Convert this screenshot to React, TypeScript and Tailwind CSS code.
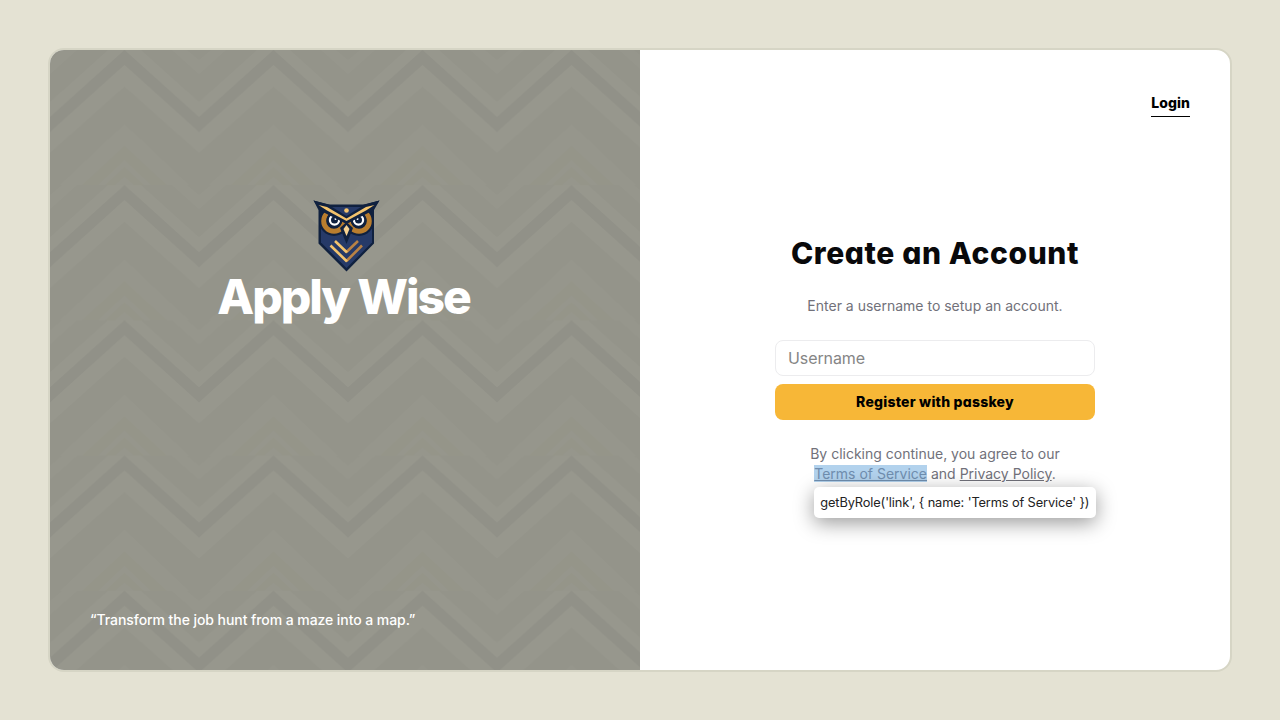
import React from "react";

function Backdrop() {
  return (
    <svg className="absolute inset-0 h-full w-full" aria-hidden="true">
      <defs>
        <pattern id="zigzag" width="149" height="135.2" patternUnits="userSpaceOnUse">
          <rect width="149" height="135.2" fill="#94948a" />
          <path d="M0 10 L12 0 H27 L0 24 Z M149 10 L137 0 H122 L149 24 Z" fill="#96968c" />
          <path d="M0 52 L58 0 H74.500 L0 67 Z M149 52 L91 0 H74.500 L149 67 Z" fill="#97978d" />
          <path d="M0 67 L74.500 0 L149 67 V82 L74.500 15 L0 82 Z" fill="#919188" />
          <path d="M0 82 L74.500 15 L149 82 V103 L74.500 36.500 L0 103 Z" fill="#97978d" />
          <path d="M10 135.200 L74.500 74 L139 135.200 Z" fill="#96968c" />
          <path d="M32 135.200 L74.500 96 L117 135.200 H101 L74.500 110 L48 135.200 Z" fill="#959589" />
          <path d="M55 135.200 L74.500 117 L94 135.200 H84 L74.500 127 L65 135.200 Z" fill="#959589" />
        </pattern>
      </defs>
      <rect width="100%" height="100%" fill="url(#zigzag)" />
    </svg>
  );
}

function Owl() {
  return (
    <svg viewBox="0 0 92 90" className="h-[90px] w-[92px]" aria-hidden="true">
      <path d="M13.500 10.500 L28 14.500 H65 L79.500 10.500 L74 20 V53.500 L46.500 81.500 L18.500 53.500 V20 Z" fill="#10213f" />
      <path d="M21 30 H72 V52.500 L46.500 78 L21 52.500 Z" fill="#263a68" />
      <circle cx="34" cy="31" r="15" fill="#10213f" />
      <circle cx="59" cy="31" r="15" fill="#10213f" />
      <circle cx="34" cy="31" r="10.300" fill="none" stroke="#b97d2e" strokeWidth="5" />
      <circle cx="59" cy="31" r="10.300" fill="none" stroke="#b97d2e" strokeWidth="5" />
      <circle cx="34.500" cy="30" r="8" fill="#10213f" />
      <circle cx="58.500" cy="30" r="8" fill="#10213f" />
      <circle cx="34.500" cy="30" r="4.600" fill="#10213f" stroke="#fff" strokeWidth="2.200" />
      <circle cx="58.500" cy="30" r="4.600" fill="#10213f" stroke="#fff" strokeWidth="2.200" />
      <circle cx="35.500" cy="29" r="1" fill="#fff" />
      <circle cx="57.500" cy="29" r="1" fill="#fff" />
      <path d="M13.500 10.500 L29 14.500 L46.500 24 L64 14.500 L79.500 10.500 L72 21 L46.500 34 L21 21 Z" fill="#10213f" />
      <path d="M32 17 H61 L46.500 26 Z" fill="#263a68" />
      <path d="M18.500 15 L27 17 L46.500 28.500 L66 17 L74.500 15 L66 20.500 L46.500 31 L27 20.500 Z" fill="#f3c36d" />
      <circle cx="46.500" cy="20.500" r="2.300" fill="#f3c36d" />
      <path d="M46.500 32 L53 38 L46.500 54 L40 38 Z" fill="#10213f" />
      <path d="M46.500 35 L49.500 39 L46.500 46 L43.500 39 Z" fill="#f7d291" />
      <path d="M46.500 62 L58 51 M46.500 71 L62 55.500" fill="none" stroke="#b98245" strokeWidth="2.600" />
      <path d="M35 51 L47 62.500 M30.500 55.500 L47 71.500" fill="none" stroke="#f3c36d" strokeWidth="2.600" />
    </svg>
  );
}

export default function App() {
  return (
    <main className="h-screen w-full bg-[#e4e2d3] p-12 font-['Inter',sans-serif] text-[#09090b]">
      <div className="grid h-full grid-cols-2 overflow-hidden rounded-2xl border-2 border-[#d6d5c5] bg-white">
        <section className="relative flex flex-col overflow-hidden p-10 text-white">
          <Backdrop />
          <div className="relative flex flex-1 flex-col items-center pt-[100px]">
            <div className="ml-px h-[90px]"><Owl /></div>
            <div className="-mt-[7px] mr-[3px] text-5xl leading-[48px] font-extrabold tracking-[-2.1px]">Apply Wise</div>
          </div>
          <p className="relative text-sm leading-5 font-medium tracking-[-0.07px]">“Transform the job hunt from a maze into a map.”</p>
        </section>
        <section className="relative flex flex-col items-center">
          <div className="flex w-full justify-end px-10 pt-10">
            <a href="#" className="border-b border-black pt-[3px] pb-[3px] text-sm leading-5 font-extrabold tracking-[0.08px] text-black [font-feature-settings:'cv11']">Login</a>
          </div>
          <div className="flex w-80 flex-col items-center pt-[118px] text-center">
            <h1 className="text-[30px] leading-9 font-extrabold tracking-[0.62px] whitespace-nowrap [font-feature-settings:'cv11']">Create an Account</h1>
            <p className="mt-[25px] text-sm leading-5 text-[#71717a]">Enter a username to setup an account.</p>
            <input placeholder="Username" className="mt-6 h-9 w-full rounded-lg border border-[#ececee] px-3 text-base tracking-[-0.1px] outline-none placeholder:text-[#858585]" />
            <button className="mt-2 h-9 w-full rounded-lg bg-[#f7b737] text-sm font-extrabold tracking-[0.22px] text-black [font-feature-settings:'cv11']">Register with passkey</button>
            <p className="mt-6 text-sm leading-5 text-[#71717a]">
              By clicking continue, you agree to our<br />
              <span className="relative inline-block">
                <a href="#" className="bg-[#b2d2ed] text-[#708eaf] underline">Terms of Service</a>
                <span className="absolute top-[23px] left-0 flex h-[31px] w-[282px] items-center rounded-[5px] bg-white px-1.5 text-[12.8px] tracking-[-0.12px] whitespace-nowrap text-[#222] shadow-[0_5px_20px_rgba(0,0,0,0.4)]">getByRole('link', &#123; name: 'Terms of Service' &#125;)</span>
              </span>{" "}
              and <a href="#" className="underline">Privacy Policy</a>.
            </p>
          </div>
        </section>
      </div>
    </main>
  );
}
